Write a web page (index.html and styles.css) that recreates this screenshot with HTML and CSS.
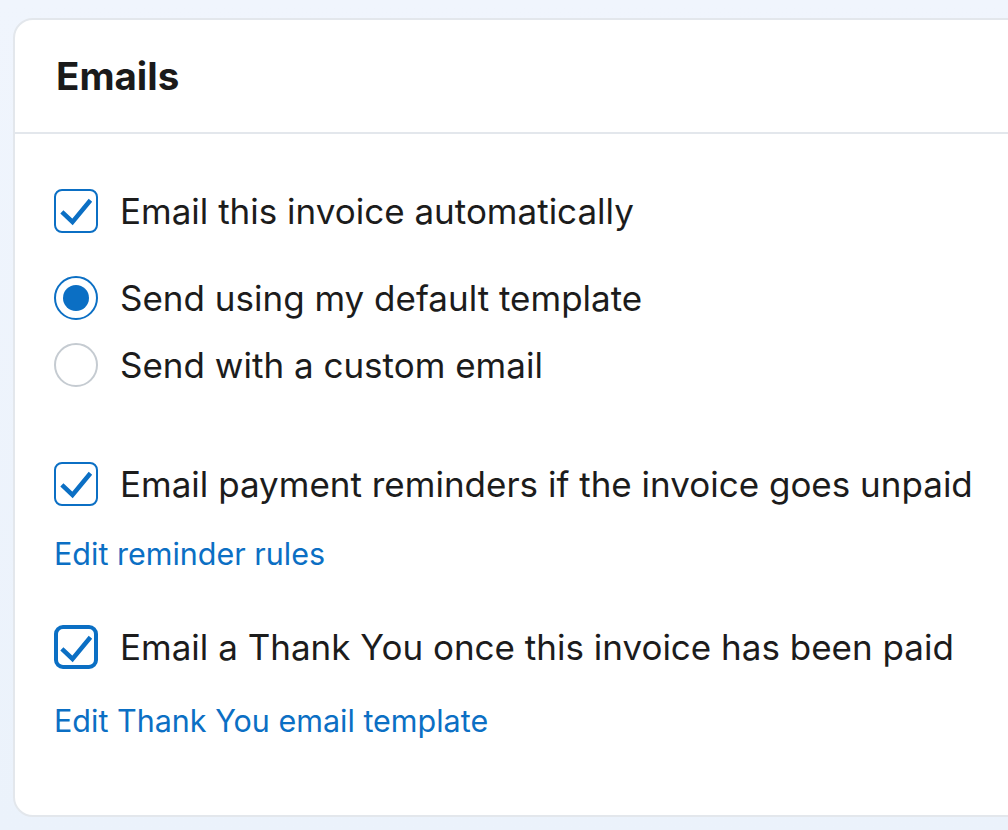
FILE: index.html
```html
<!DOCTYPE html>
<html lang="en">
<head>
<meta charset="utf-8">
<title>Emails</title>
<link rel="stylesheet" href="styles.css">
</head>
<body>
<div class="page">
  <section class="card">
    <header class="card-header">
      <h2 class="title">Emails</h2>
    </header>
    <div class="card-body">
      <label class="row row-auto">
        <span class="checkbox">
          <svg viewBox="0 0 40 40" width="40" height="40"><path d="M7.5 22.5 L16.5 31 L33 11" /></svg>
        </span>
        <span class="label">Email this invoice automatically</span>
      </label>
      <label class="row row-radio1">
        <span class="radio radio-on"><span class="dot"></span></span>
        <span class="label">Send using my default template</span>
      </label>
      <label class="row row-radio2">
        <span class="radio"></span>
        <span class="label">Send with a custom email</span>
      </label>
      <label class="row row-remind">
        <span class="checkbox">
          <svg viewBox="0 0 40 40" width="40" height="40"><path d="M7.5 22.5 L16.5 31 L33 11" /></svg>
        </span>
        <span class="label">Email payment reminders if the invoice goes unpaid</span>
      </label>
      <a class="link link-remind" href="#">Edit reminder rules</a>
      <label class="row row-thanks">
        <span class="checkbox checkbox-focus">
          <svg viewBox="0 0 40 40" width="40" height="40"><path d="M7.5 23.5 L16.5 32 L33 12" /></svg>
        </span>
        <span class="label">Email a Thank You once this invoice has been paid</span>
      </label>
      <a class="link link-thanks" href="#">Edit Thank You email template</a>
    </div>
  </section>
</div>
</body>
</html>
```

FILE: styles.css
```css
html, body {
  margin: 0;
  padding: 0;
}
body {
  width: 1008px;
  height: 830px;
  overflow: hidden;
  background: linear-gradient(180deg, #f0f5fd 0%, #ebf2fb 100%);
  font-family: Inter, Lato, "Noto Sans", sans-serif;
  color: #1f1f1f;
}
.page {
  padding: 18px 0 0 13px;
}
.card {
  width: 1100px;
  height: 799px;
  box-sizing: border-box;
  background: #ffffff;
  border: 2px solid #e3e7ec;
  border-radius: 20px;
}
.card-header {
  height: 112px;
  border-bottom: 2px solid #e3e7ec;
  display: flex;
  align-items: center;
  padding-left: 41px;
}
.title {
  margin: 0;
  font-size: 38.5px;
  font-weight: 700;
  color: #1a1a1a;
}
.card-body {
  padding: 55px 0 0 39px;
  display: flex;
  flex-direction: column;
  align-items: flex-start;
}
.row {
  display: flex;
  align-items: center;
  gap: 22px;
  height: 44px;
}
.label {
  font-size: 35px;
  line-height: 44px;
  color: #1c1c1c;
}
.row-radio1 { margin-top: 43px; }
.row-radio2 { margin-top: 23px; }
.row-remind { margin-top: 75px; }
.link-remind { margin-top: 28px; }
.row-thanks { margin-top: 51px; }
.link-thanks { margin-top: 32px; }

.checkbox {
  width: 44px;
  height: 44px;
  box-sizing: border-box;
  border: 2px solid #0b6fc4;
  border-radius: 8px;
  display: flex;
  align-items: center;
  justify-content: center;
  flex: none;
}
.checkbox svg {
  display: block;
  flex: none;
}
.checkbox path {
  fill: none;
  stroke: #0b6fc4;
  stroke-width: 4.5;
  stroke-linecap: square;
  stroke-linejoin: miter;
}
.checkbox-focus {
  border-width: 4px;
  border-radius: 9px;
}
.radio {
  width: 44px;
  height: 44px;
  box-sizing: border-box;
  border: 2px solid #c5cbd1;
  border-radius: 50%;
  display: flex;
  align-items: center;
  justify-content: center;
  flex: none;
}
.radio-on {
  border-color: #0b6fc4;
}
.dot {
  width: 26px;
  height: 26px;
  border-radius: 50%;
  background: #0b6fc4;
}
.link {
  font-size: 30.5px;
  line-height: 40px;
  color: #0b6fc4;
  text-decoration: none;
}
```
